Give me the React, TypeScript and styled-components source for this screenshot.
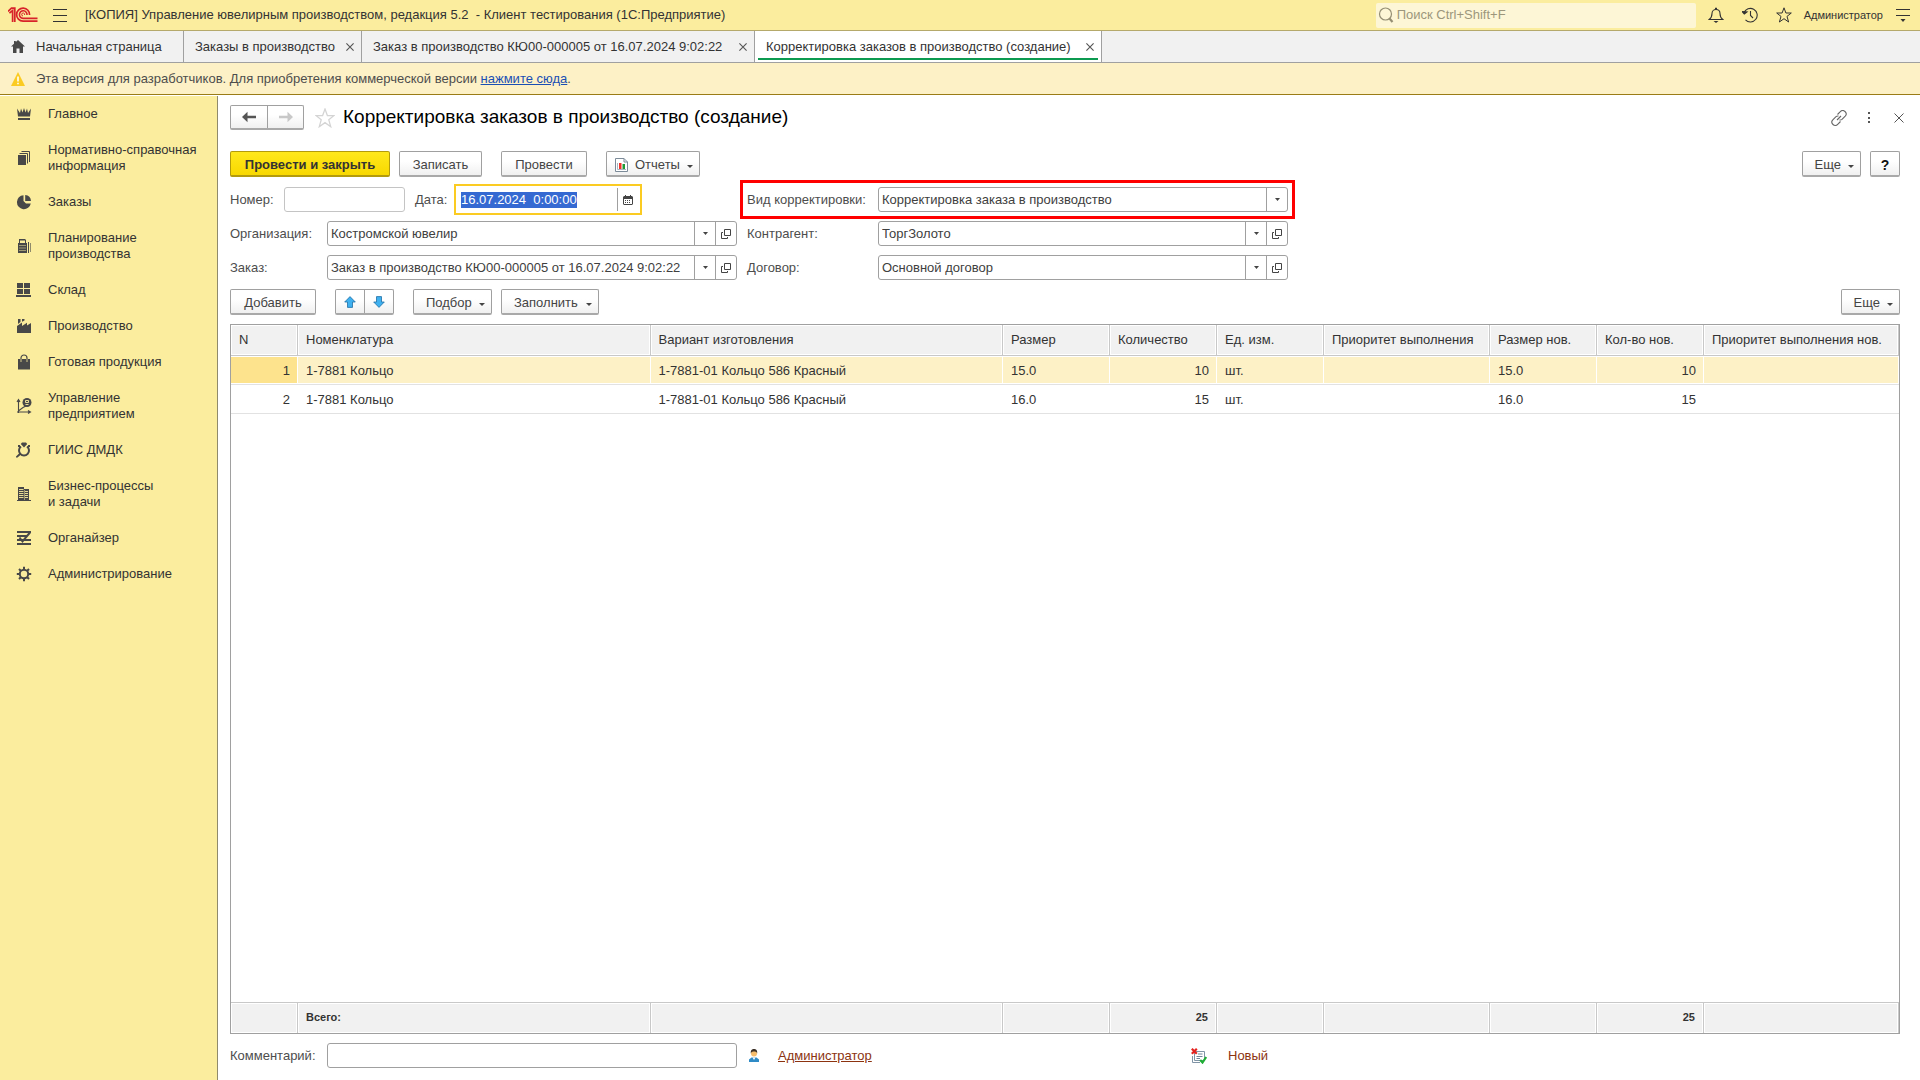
import React, { useEffect, useRef } from "react";
import styled, { createGlobalStyle, css } from "styled-components";

const color = {
  brand: "#fbed9e",
  brandLight: "#fdf6d6",
  notice: "#fdf1c6",
  noticeLine: "#9a7c16",
  panel: "#f1f1f1",
  line: "#a0a0a0",
  softLine: "#c8c8c8",
  text: "#333333",
  label: "#4d4d4d",
  link: "#8c3310",
  selected: "#fdf1c6",
  current: "#fde38d",
};

const GlobalStyle = createGlobalStyle`
  *, *::before, *::after { box-sizing: border-box; }
  body { margin: 0; background: #fff; }
  body, button, input, select {
    font-family: "Liberation Sans", Arial, sans-serif;
    font-size: 13px;
    line-height: 16px;
    color: ${color.text};
  }
  svg { display: block; flex: none; }
`;

const Shell = styled.div`
  display: flex;
  flex-direction: column;
  min-height: 100vh;
`;

const PlainButton = styled.button`
  display: flex;
  align-items: center;
  justify-content: center;
  padding: 0;
  border: 0;
  background: none;
  color: inherit;
  cursor: pointer;
`;

/* Title bar */

const TitleBar = styled.header`
  display: flex;
  align-items: center;
  height: 31px;
  padding: 0 10px 0 8px;
  background: ${color.brand};
  border-bottom: 1px solid #b5a96b;
`;

const MenuButton = styled(PlainButton)`
  margin: 0 18px 0 15px;
`;

const AppTitle = styled.div`
  flex: 1;
  white-space: pre;
`;

const Search = styled.label`
  display: flex;
  align-items: center;
  width: 320px;
  height: 25px;
  padding-left: 2px;
  gap: 3px;
  background: ${color.brandLight};
  border-radius: 2px;
`;

const SearchInput = styled.input`
  flex: 1;
  min-width: 0;
  padding: 0;
  border: 0;
  outline: 0;
  background: none;
  &::placeholder { color: #9c967c; opacity: 1; }
`;

const TitleTools = styled.div`
  display: flex;
  align-items: center;
  gap: 18px;
  margin: 0 12px;
`;

const UserName = styled(PlainButton)`
  margin-right: 13px;
  font-size: 11px;
`;

/* Window tabs */

const Tabs = styled.nav`
  display: flex;
  height: 32px;
  background: ${color.panel};
  border-bottom: 1px solid ${color.line};
`;

const Tab = styled.div<{ $active?: boolean; $width: number }>`
  position: relative;
  display: flex;
  align-items: center;
  justify-content: space-between;
  gap: 8px;
  min-width: ${(p) => p.$width}px;
  padding: 0 7px 0 11px;
  border-right: 1px solid ${color.line};
  white-space: nowrap;
  ${(p) =>
    p.$active &&
    css`
      background: #fff;
      &::after {
        content: "";
        position: absolute;
        left: 3px;
        right: 3px;
        bottom: 2px;
        height: 2px;
        background: #0c9a50;
      }
    `}
`;

const TabTitle = styled(PlainButton)`
  gap: 11px;
`;

/* Notice */

const Notice = styled.div`
  display: flex;
  align-items: center;
  gap: 11px;
  height: 32px;
  padding: 0 11px;
  color: ${color.label};
  background: ${color.notice};
  border-bottom: 1px solid ${color.noticeLine};
  a { color: #1a4fb4; }
`;

/* Sections */

const Body = styled.div`
  display: flex;
  flex: 1;
`;

const Sidebar = styled.nav`
  flex: none;
  width: 218px;
  margin-top: 1px;
  background: ${color.brand};
  border-right: 1px solid #8f8a6c;
`;

const Section = styled.a`
  display: flex;
  align-items: center;
  gap: 16px;
  padding: 10px 12px 10px 16px;
  color: ${color.text};
  text-decoration: none;
  white-space: pre-line;
`;

const Main = styled.main`
  display: flex;
  flex: 1;
  flex-direction: column;
  min-width: 0;
  padding: 10px 20px 12px 12px;
`;

/* Form header */

const FormHeader = styled.div`
  display: flex;
  align-items: center;
  height: 25px;
  margin-bottom: 21px;
`;

const StarButton = styled(PlainButton)`
  margin-left: 11px;
`;

const FormTitle = styled.h1`
  flex: 1;
  margin: 0 0 0 8px;
  padding-bottom: 2px;
  font-size: 19px;
  font-weight: 400;
  line-height: 24px;
  color: #000;
`;

const HeaderTools = styled.div`
  display: flex;
  gap: 14px;
  margin-right: -7px;
`;

const CloseBox = styled.span`
  display: flex;
  align-items: center;
  justify-content: center;
  width: 16px;
  height: 16px;
`;

/* Buttons */

const raised = css`
  border: 1px solid ${color.line};
  border-bottom: 2px solid #a9a9a9;
  border-radius: 2px;
  background: linear-gradient(#fff 40%, #f0f0f0);
`;

const Button = styled.button<{ $primary?: boolean; $width: number }>`
  display: flex;
  align-items: center;
  justify-content: center;
  min-width: ${(p) => p.$width}px;
  height: 26px;
  padding: 2px 4px 0;
  color: #444;
  white-space: nowrap;
  cursor: pointer;
  ${raised}
  ${(p) =>
    p.$primary &&
    css`
      font-weight: 700;
      background: linear-gradient(#ffe81c, #f8d800);
      border-color: #b39b0c;
      color: ${color.text};
    `}
`;

const MenuTrigger = styled(Button)<{ $icon?: boolean }>`
  justify-content: flex-start;
  gap: 7px;
  padding: 2px 6px 0 ${(p) => (p.$icon ? 8 : 12)}px;
  svg:last-child { margin-left: auto; }
`;

const HelpButton = styled(Button)`
  font-size: 14px;
  font-weight: 700;
  color: #111;
`;

const ButtonPair = styled.div`
  display: flex;
  ${raised}
`;

const PairButton = styled(PlainButton)<{ $width: number; $height: number }>`
  width: ${(p) => p.$width}px;
  height: ${(p) => p.$height}px;
  & + & { border-left: 1px solid ${color.line}; }
`;

const Toolbar = styled.div`
  display: flex;
  align-items: center;
  gap: 9px;
  margin-bottom: 9px;
`;

const Gap = styled.div`
  width: 1px;
`;

const Spacer = styled.div`
  flex: 1;
`;

/* Fields */

const Fields = styled.div`
  display: grid;
  grid-template-columns: minmax(0, 507px) minmax(0, 541px);
  gap: 9px 10px;
  margin: 1px 0 9px;
`;

const Field = styled.div<{ $framed?: boolean }>`
  display: flex;
  align-items: center;
  height: 25px;
  ${(p) =>
    p.$framed &&
    css`
      outline: 3px solid #ff0000;
      outline-offset: 4px;
    `}
`;

const Label = styled.label<{ $width: number }>`
  flex: none;
  width: ${(p) => p.$width}px;
  color: ${color.label};
  white-space: nowrap;
`;

const DateLabel = styled(Label)`
  margin-left: 10px;
`;

const Box = styled.div<{ $width?: number; $tone?: "muted" | "focus" }>`
  display: flex;
  flex: ${(p) => (p.$width ? "none" : 1)};
  width: ${(p) => (p.$width ? `${p.$width}px` : "auto")};
  min-width: 0;
  height: 25px;
  border: 1px solid ${(p) => (p.$tone === "muted" ? "#c4c4c4" : color.line)};
  border-radius: 3px;
  background: #fff;
  ${(p) =>
    p.$tone === "focus" &&
    css`
      border-color: transparent;
      border-radius: 0;
      outline: 2px solid #fbcb22;
      outline-offset: 1px;
    `}
`;

const entry = css`
  flex: 1;
  min-width: 0;
  padding: 0 3px;
  border: 0;
  outline: 0;
  background: none;
  color: #404040;
`;

const Input = styled.input`
  ${entry}
  &::selection { background: rgba(51, 103, 209, 0.99); color: #fff; }
`;

const Select = styled.select`
  ${entry}
  appearance: none;
`;

const boxSide = css`
  display: flex;
  flex: none;
  align-items: center;
  justify-content: center;
  width: 21px;
  border-left: 1px solid ${color.line};
`;

const BoxButton = styled(PlainButton)`
  ${boxSide}
`;

const BoxArrow = styled.span`
  ${boxSide}
  pointer-events: none;
`;

/* Table */

const TableFrame = styled.div`
  display: flex;
  flex: 1;
  border: 1px solid ${color.line};
`;

const Table = styled.table`
  width: 100%;
  table-layout: fixed;
  border-collapse: separate;
  border-spacing: 0;
`;

const Col = styled.col<{ $width?: number }>`
  width: ${(p) => (p.$width ? `${p.$width}px` : "auto")};
`;

const cell = css<{ $right?: boolean }>`
  padding: 0 8px;
  text-align: ${(p) => (p.$right ? "right" : "left")};
  font-weight: 400;
  white-space: nowrap;
  overflow: hidden;
`;

const HeadCell = styled.th`
  ${cell}
  height: 31px;
  background: ${color.panel};
  border-right: 1px solid ${color.softLine};
  border-bottom: 1px solid ${color.softLine};
  box-shadow: inset 0 0 0 1px #fff;
`;

const Row = styled.tr<{ $selected?: boolean }>`
  background: ${(p) => (p.$selected ? color.selected : "#fff")};
`;

const Cell = styled.td<{ $right?: boolean; $current?: boolean }>`
  ${cell}
  height: 29px;
  padding-top: 2px;
  border-bottom: 1px solid #e2e2e2;
  box-shadow: inset 0 1px #fff, inset -1px -1px #fff;
  ${(p) => p.$current && `background: ${color.current};`}
`;

const FootCell = styled.td<{ $right?: boolean }>`
  ${cell}
  height: 31px;
  padding-bottom: 2px;
  background: ${color.panel};
  border-top: 1px solid ${color.softLine};
  border-right: 1px solid ${color.softLine};
  box-shadow: inset 0 0 0 1px #fff;
  font-size: 11px;
  font-weight: 700;
`;

const Filler = styled.td`
  padding: 0;
`;

/* Footer */

const Footer = styled.footer`
  display: grid;
  grid-template-columns: 507px 454px auto;
  align-items: center;
  margin-top: 9px;
`;

const FooterItem = styled.div`
  display: flex;
  align-items: center;
  gap: 17px;
  padding-left: 10px;
  a { color: ${color.link}; }
`;

const PersonSlot = styled.span`
  display: flex;
  justify-content: center;
  width: 14px;
`;

const StatusItem = styled(FooterItem)`
  padding-left: 0;
`;

const Status = styled.span`
  margin-left: 4px;
  color: ${color.link};
`;

/* Icons */

const Logo = () => (
  <svg width="30" height="16" viewBox="0 0 30 16" fill="none" stroke="#d8232a">
    <path d="M0 4.5 3.5 1.2H6.8V15M4.6 15V3.6L1.4 6.2" strokeWidth="1.7" />
    <path d="M21.6 8A6.500 6.500 0 1 0 15 14.2H29.5" strokeWidth="1.7" />
    <path d="M19 8A3.800 3.800 0 1 0 15 11.4H29.5" strokeWidth="1.6" />
    <path d="M16.6 8A1.500 1.500 0 1 0 15 9" strokeWidth="1" />
  </svg>
);

const Burger = () => (
  <svg width="14" height="13" stroke="#333" strokeWidth="1">
    <path d="M0 .5H14M0 6.5H14M0 12.5H14" />
  </svg>
);

const SearchIcon = () => (
  <svg width="16" height="18" viewBox="0 0 16 18" fill="none" stroke="#958f74">
    <circle cx="7.500" cy="8" r="6" strokeWidth="1.2" />
    <path d="M11.500 12.500 14.500 16" strokeWidth="2.200" />
  </svg>
);

const Bell = () => (
  <svg width="16" height="16" viewBox="0 0 16 16" fill="none" stroke="#333" strokeWidth="1.1">
    <path d="M1.200 12.500C3.500 10.800 4 9 4 6.500 4 4 5.800 2.500 8 2.500S12 4 12 6.500C12 9 12.500 10.800 14.800 12.500Z" />
    <path d="M7 1.500H9" strokeWidth="1.500" />
    <path d="M5.500 14H10.500L8 16Z" fill="#333" stroke="none" />
  </svg>
);

const HistoryIcon = () => (
  <svg width="16" height="16" viewBox="0 0 16 16" fill="none" stroke="#333" strokeWidth="1.1">
    <path d="M2 5.800A6.800 6.800 0 1 1 3.500 12.900" />
    <path d="M0 4.500 2.300 7 5 5Z" fill="#333" />
    <path d="M8.500 4V8.500L11 11" />
  </svg>
);

const Star = ({ size = 16, stroke = "#333" }: { size?: number; stroke?: string }) => (
  <svg width={size} height={size} viewBox="0 0 16 16" fill="none" stroke={stroke} strokeWidth="1">
    <path d="M8 .8 9.900 6H15.300L11 9.400 12.600 15 8 11.700 3.400 15 5 9.400.7 6H6.100Z" />
  </svg>
);

const ServiceMenu = () => (
  <svg width="14" height="14" stroke="#333">
    <path d="M0 1.500H14M0 7.500H14" />
    <path d="M4.500 11H9.500L7 14Z" fill="#333" stroke="none" />
  </svg>
);

const Home = () => (
  <svg width="14" height="13" viewBox="0 0 14 13" fill="#484848">
    <path d="M7 0 14 6.500H12V13H8.500V8.500H5.500V13H2V6.500H0L3 3.800V1H4.800V2.100Z" />
  </svg>
);

const Cross = ({ size, stroke = "#555" }: { size: number; stroke?: string }) => (
  <svg width={size} height={size} viewBox="0 0 10 10" stroke={stroke} strokeWidth={size > 8 ? 1 : 1.4}>
    <path d="M.5.5 9.500 9.500M9.500.5.5 9.500" />
  </svg>
);

const Warning = () => (
  <svg width="14" height="14" viewBox="0 0 14 14">
    <path d="M7 0 14 14H0Z" fill="#fbcb22" />
    <path d="M7 4.500V9.500M7 10.800V12.300" stroke="#fff" strokeWidth="1.600" />
  </svg>
);

const Arrow = ({ flip, tone }: { flip?: boolean; tone: string }) => (
  <svg width="14" height="12" viewBox="0 0 14 12" fill={tone}>
    <path d={flip ? "M14 6 8.500.8V4.800H0V7.200H8.500V11.200Z" : "M0 6 5.500.8V4.800H14V7.200H5.500V11.200Z"} />
  </svg>
);

const Chain = () => (
  <svg width="16" height="16" viewBox="0 0 16 16" fill="none" stroke="#666" strokeWidth="1.100">
    <path d="M6.500 4.500 9.300 1.700A3.200 3.200 0 0 1 14.200 6.200L11 9.400A3 3 0 0 1 8.500 10" />
    <path d="M9.500 11.500 6.700 14.300A3.200 3.200 0 0 1 1.800 9.800L5 6.600A3 3 0 0 1 7.500 6" />
    <path d="M6 10 10 6" />
  </svg>
);

const Dots = () => (
  <svg width="16" height="16" fill="#555">
    <path d="M7 2H9V4H7ZM7 7H9V9H7ZM7 11H9V13H7Z" />
  </svg>
);

const Report = () => (
  <svg width="13" height="14" viewBox="0 0 13 14">
    <path d="M.5.5H9L12.500 4V13.500H.5Z" fill="#fff" stroke="#7c8b99" />
    <path d="M9 .5V4H12.500" fill="none" stroke="#7c8b99" />
    <path d="M2.500 5V11.500H11" fill="none" stroke="#a9b4be" />
    <path d="M4 5H6.500V11H4Z" fill="#f0322b" />
    <path d="M7.500 6H10V11H7.500Z" fill="#1f9a35" />
  </svg>
);

const Caret = () => (
  <svg width="5" height="3" viewBox="0 0 5 3" fill="#444">
    <path d="M0 0H5L2.500 3Z" />
  </svg>
);

const LowCaret = () => (
  <svg width="6" height="7" viewBox="0 0 6 7" fill="#444">
    <path d="M0 4H6L3 7Z" />
  </svg>
);

const OpenIcon = () => (
  <svg width="10" height="10" fill="none" stroke="#444">
    <path d="M3.500.5H9.500V6.500H3.500ZM2 3.500H.5V9.500H6.500V8" />
  </svg>
);

const Calendar = () => (
  <svg width="10" height="10" viewBox="0 0 10 10">
    <path d="M1 1H2V0H3V1H7V0H8V1H9L10 2V9L9 10H1L0 9V2Z" fill="#444" />
    <path d="M1 4H9V9H1Z" fill="#fff" />
    <path d="M2 5.500H8M2 7.500H8" stroke="#444" strokeDasharray="1 1" />
  </svg>
);

const BlueArrow = ({ down }: { down?: boolean }) => (
  <svg width="12" height="12" viewBox="0 0 12 12">
    <path
      d={down ? "M6 11.400.7 6H3.500V.6H8.500V6H11.300Z" : "M6 .6 11.300 6H8.500V11.400H3.500V6H.7Z"}
      fill="#3fb1f0"
      stroke="#1f6fa5"
      strokeWidth=".8"
    />
  </svg>
);

const Person = () => (
  <svg width="10" height="14" viewBox="0 0 10 14">
    <path d="M0 13V10.500L2.500 8.500H7.500L10 10.500V13Z" fill="#2f8bc6" />
    <path d="M3.500 8.500 5 11 6.500 8.500Z" fill="#fff" />
    <circle cx="5" cy="4.500" r="3" fill="#f6bd6c" />
    <path d="M1.800 4.500C1.500 1 3 0 5 0S8.500 1 8.200 4.500C7.500 2.500 6 2.500 5 2.500S2.500 2.500 1.800 4.500Z" fill="#3b3026" />
  </svg>
);

const StatusIcon = () => (
  <svg width="16" height="16" viewBox="0 0 16 16" fill="none">
    <path d="M3.500 3.500H13.500V12.500H3.500Z" fill="#fff" stroke="#8094a6" />
    <path d="M1.500 8V14.500H9" stroke="#8094a6" />
    <path d="M7 6H11.500M5.500 8.500H11.500M5.500 10.500H9" stroke="#71859a" />
    <path d="M.8.8 5.800 5.800M5.800.8.8 5.800" stroke="#e3221f" strokeWidth="2.200" />
    <path d="M9.200 12 11.500 14.500 15.200 9" stroke="#1fae36" strokeWidth="2.200" />
  </svg>
);

const sectionShapes: Record<string, React.ReactNode> = {
  main: <path d="M1 2.500 4 7 5 2.500 6.500 6.500 8 2 9.500 6.500 11 2.500 12 7 15 2.500 14 10.500H2ZM2 12H14V14H2Z" />,
  info: (
    <>
      <path d="M2 5H10V15H2Z" />
      <path d="M3.500 3.500H11.500V13.500M5.500 1.500H13.500V12" fill="none" stroke="#484848" />
    </>
  ),
  orders: <path d="M7.500 1.200A7 7 0 1 0 14.800 9.500H10L7.500 7ZM9.200 1A6.500 6.500 0 0 1 15 7H9.200Z" />,
  planning: (
    <>
      <path fillRule="evenodd" d="M3 1H9L10 2V5H11V15H2V5H3ZM4 2.500V5H9V2.500Z" />
      <path d="M12 4H13V15H12ZM14 5H14.600V14H14Z" />
      <path d="M3.500 7.500H10M3.500 10H10M3.500 12.500H10" stroke="#fbed9e" strokeDasharray="1 1" />
    </>
  ),
  stock: <path d="M1 1H7V6H1ZM8 1H14V6H8ZM1 7H7V12H1ZM8 7H14V12H8ZM0 13H15V15H0Z" />,
  production: (
    <>
      <path d="M1 8 6 4.500V8L11 4.800V7.500L15 5V15H1Z" />
      <path d="M2 1H4.500V4L2 6ZM6 1H8.500V2.500L6 3.800Z" />
    </>
  ),
  goods: (
    <>
      <path d="M2 5H14V15.500H2Z" />
      <path d="M5 8V4A3 3 0 0 1 11 4V8" fill="none" stroke="#484848" strokeWidth="1.200" />
      <path d="M5 5V8M11 5V8" stroke="#fbed9e" strokeWidth=".8" />
    </>
  ),
  company: (
    <>
      <path d="M2.500 15V2M1 4 2.500 1.500 4 4M1 14H14M12 12.500 14.500 14 12 15.500M3 12.500 7 9.500 10 8" fill="none" stroke="#484848" strokeWidth="1.100" />
      <circle cx="11" cy="4.500" r="4.500" />
      <path d="M9.500 2.500H12.500V4.500H9.500ZM9.500 6.500H12.500" fill="none" stroke="#fbed9e" strokeWidth=".9" />
    </>
  ),
  giis: (
    <>
      <path d="M5 4.500A5 5 0 1 0 11 4.500" fill="none" stroke="#484848" strokeWidth="2" />
      <path d="M8 5.500 4.800 2 6 .5H10L11.200 2ZM0 14.500 3.500 11 5 12.500 1.500 15.500H0ZM2 3H4V5H2ZM12 3H14V5H12Z" />
    </>
  ),
  tasks: (
    <>
      <path fillRule="evenodd" d="M2 1H8V3H13V14H15V15H1V14H2ZM8.500 4V14H9V4Z" />
      <path d="M3 3.500H7.500M3 5.500H7.500M3 7.500H7.500M3 9.500H7.500M3 11.500H7.500M9 5.500H12M9 7.500H12M9 9.500H12M9 11.500H12" stroke="#fbed9e" strokeWidth=".9" />
    </>
  ),
  organizer: (
    <path d="M1 2H15M1 6H12M1 10H15M1 14H15M3.500 7.500 6.500 11.500 14 2.500" fill="none" stroke="#484848" strokeWidth="2" />
  ),
  admin: (
    <>
      <circle cx="8" cy="8" r="4.200" fill="none" stroke="#484848" strokeWidth="2" />
      <path d="M8 .8V4M8 12V15.200M.8 8H4M12 8H15.200M3 3 5 5M11 11 13 13M13 3 11 5M5 11 3 13" stroke="#484848" strokeWidth="2" />
    </>
  ),
};

/* Data */

const sections: [string, string][] = [
  ["main", "Главное"],
  ["info", "Нормативно-справочная\nинформация"],
  ["orders", "Заказы"],
  ["planning", "Планирование\nпроизводства"],
  ["stock", "Склад"],
  ["production", "Производство"],
  ["goods", "Готовая продукция"],
  ["company", "Управление\nпредприятием"],
  ["giis", "ГИИС ДМДК"],
  ["tasks", "Бизнес-процессы\nи задачи"],
  ["organizer", "Органайзер"],
  ["admin", "Администрирование"],
];

const openTabs = [
  { title: "Заказы в производство", width: 178 },
  { title: "Заказ в производство КЮ00-000005 от 16.07.2024 9:02:22", width: 393 },
  { title: "Корректировка заказов в производство (создание)", width: 347, active: true },
];

const columns: { title: string; width?: number; right?: boolean; total?: string }[] = [
  { title: "N", width: 67, right: true },
  { title: "Номенклатура", total: "Всего:" },
  { title: "Вариант изготовления" },
  { title: "Размер", width: 107 },
  { title: "Количество", width: 107, right: true, total: "25" },
  { title: "Ед. изм.", width: 107 },
  { title: "Приоритет выполнения", width: 166 },
  { title: "Размер нов.", width: 107 },
  { title: "Кол-во нов.", width: 107, right: true, total: "25" },
  { title: "Приоритет выполнения нов.", width: 195 },
];

const rows = [
  ["1", "1-7881 Кольцо", "1-7881-01 Кольцо 586 Красный", "15.0", "10", "шт.", "", "15.0", "10", ""],
  ["2", "1-7881 Кольцо", "1-7881-01 Кольцо 586 Красный", "16.0", "15", "шт.", "", "16.0", "15", ""],
];

const RefField = ({ id, label, value, labelWidth }: { id: string; label: string; value: string; labelWidth: number }) => (
  <Field>
    <Label htmlFor={id} $width={labelWidth}>{label}</Label>
    <Box>
      <Input id={id} defaultValue={value} />
      <BoxButton aria-label="Выбрать"><Caret /></BoxButton>
      <BoxButton aria-label="Открыть"><OpenIcon /></BoxButton>
    </Box>
  </Field>
);

export default function App() {
  const dateRef = useRef<HTMLInputElement>(null);

  useEffect(() => {
    dateRef.current?.focus();
    dateRef.current?.select();
  }, []);

  return (
    <Shell>
      <GlobalStyle />
      <TitleBar>
        <Logo />
        <MenuButton aria-label="Меню"><Burger /></MenuButton>
        <AppTitle>{"[КОПИЯ] Управление ювелирным производством, редакция 5.2  - Клиент тестирования (1С:Предприятие)"}</AppTitle>
        <Search>
          <SearchIcon />
          <SearchInput placeholder="Поиск Ctrl+Shift+F" aria-label="Поиск" />
        </Search>
        <TitleTools>
          <PlainButton aria-label="Уведомления"><Bell /></PlainButton>
          <PlainButton aria-label="История"><HistoryIcon /></PlainButton>
          <PlainButton aria-label="Избранное"><Star /></PlainButton>
        </TitleTools>
        <UserName>Администратор</UserName>
        <PlainButton aria-label="Сервис"><ServiceMenu /></PlainButton>
      </TitleBar>

      <Tabs>
        <Tab $width={184}>
          <TabTitle><Home />Начальная страница</TabTitle>
        </Tab>
        {openTabs.map((tab) => (
          <Tab key={tab.title} $width={tab.width} $active={tab.active}>
            <TabTitle>{tab.title}</TabTitle>
            <PlainButton aria-label="Закрыть"><Cross size={8} /></PlainButton>
          </Tab>
        ))}
      </Tabs>

      <Notice>
        <Warning />
        <span>
          Эта версия для разработчиков. Для приобретения коммерческой версии <a href="#buy">нажмите сюда</a>.
        </span>
      </Notice>

      <Body>
        <Sidebar>
          {sections.map(([id, title]) => (
            <Section key={id} href={`#${id}`}>
              <svg width="16" height="16" viewBox="0 0 16 16" fill="#484848">{sectionShapes[id]}</svg>
              <span>{title}</span>
            </Section>
          ))}
        </Sidebar>

        <Main>
          <FormHeader>
            <ButtonPair>
              <PairButton $width={36} $height={22} aria-label="Назад"><Arrow tone="#555" /></PairButton>
              <PairButton $width={36} $height={22} aria-label="Вперед"><Arrow flip tone="#c8c8c8" /></PairButton>
            </ButtonPair>
            <StarButton aria-label="В избранное"><Star size={20} stroke="#d4d4d4" /></StarButton>
            <FormTitle>Корректировка заказов в производство (создание)</FormTitle>
            <HeaderTools>
              <PlainButton aria-label="Ссылка"><Chain /></PlainButton>
              <PlainButton aria-label="Действия"><Dots /></PlainButton>
              <PlainButton aria-label="Закрыть"><CloseBox><Cross size={10} /></CloseBox></PlainButton>
            </HeaderTools>
          </FormHeader>

          <Toolbar>
            <Button $width={160} $primary>Провести и закрыть</Button>
            <Button $width={83}>Записать</Button>
            <Gap />
            <Button $width={86}>Провести</Button>
            <Gap />
            <MenuTrigger $width={94} $icon><Report />Отчеты<LowCaret /></MenuTrigger>
            <Spacer />
            <MenuTrigger $width={59}>Еще<LowCaret /></MenuTrigger>
            <HelpButton $width={30}>?</HelpButton>
          </Toolbar>

          <Fields>
            <Field>
              <Label htmlFor="number" $width={54}>Номер:</Label>
              <Box $width={121} $tone="muted"><Input id="number" /></Box>
              <DateLabel htmlFor="date" $width={42}>Дата:</DateLabel>
              <Box $width={182} $tone="focus">
                <Input id="date" ref={dateRef} defaultValue="16.07.2024  0:00:00" />
                <BoxButton aria-label="Календарь"><Calendar /></BoxButton>
              </Box>
            </Field>
            <Field $framed>
              <Label htmlFor="kind" $width={131}>Вид корректировки:</Label>
              <Box>
                <Select id="kind"><option>Корректировка заказа в производство</option></Select>
                <BoxArrow><Caret /></BoxArrow>
              </Box>
            </Field>
            <RefField id="org" label="Организация:" labelWidth={97} value="Костромской ювелир" />
            <RefField id="partner" label="Контрагент:" labelWidth={131} value="ТоргЗолото" />
            <RefField id="order" label="Заказ:" labelWidth={97} value="Заказ в производство КЮ00-000005 от 16.07.2024 9:02:22" />
            <RefField id="contract" label="Договор:" labelWidth={131} value="Основной договор" />
          </Fields>

          <Toolbar>
            <Button $width={86}>Добавить</Button>
            <Gap />
            <ButtonPair>
              <PairButton $width={28} $height={23} aria-label="Вверх"><BlueArrow /></PairButton>
              <PairButton $width={29} $height={23} aria-label="Вниз"><BlueArrow down /></PairButton>
            </ButtonPair>
            <Gap />
            <MenuTrigger $width={79}>Подбор<LowCaret /></MenuTrigger>
            <MenuTrigger $width={98}>Заполнить<LowCaret /></MenuTrigger>
            <Spacer />
            <MenuTrigger $width={59}>Еще<LowCaret /></MenuTrigger>
          </Toolbar>

          <TableFrame>
            <Table>
              <colgroup>
                {columns.map((c, i) => <Col key={i} $width={c.width} />)}
              </colgroup>
              <thead>
                <tr>{columns.map((c) => <HeadCell key={c.title}>{c.title}</HeadCell>)}</tr>
              </thead>
              <tbody>
                {rows.map((row, r) => (
                  <Row key={r} $selected={r === 0}>
                    {row.map((value, i) => (
                      <Cell key={i} $right={columns[i].right} $current={r === 0 && i === 0}>{value}</Cell>
                    ))}
                  </Row>
                ))}
                <tr><Filler colSpan={columns.length} /></tr>
              </tbody>
              <tfoot>
                <tr>{columns.map((c) => <FootCell key={c.title} $right={c.right}>{c.total}</FootCell>)}</tr>
              </tfoot>
            </Table>
          </TableFrame>

          <Footer>
            <Field>
              <Label htmlFor="comment" $width={97}>Комментарий:</Label>
              <Box><Input id="comment" /></Box>
            </Field>
            <FooterItem>
              <PersonSlot><Person /></PersonSlot>
              <a href="#user">Администратор</a>
            </FooterItem>
            <StatusItem>
              <StatusIcon />
              <Status>Новый</Status>
            </StatusItem>
          </Footer>
        </Main>
      </Body>
    </Shell>
  );
}
